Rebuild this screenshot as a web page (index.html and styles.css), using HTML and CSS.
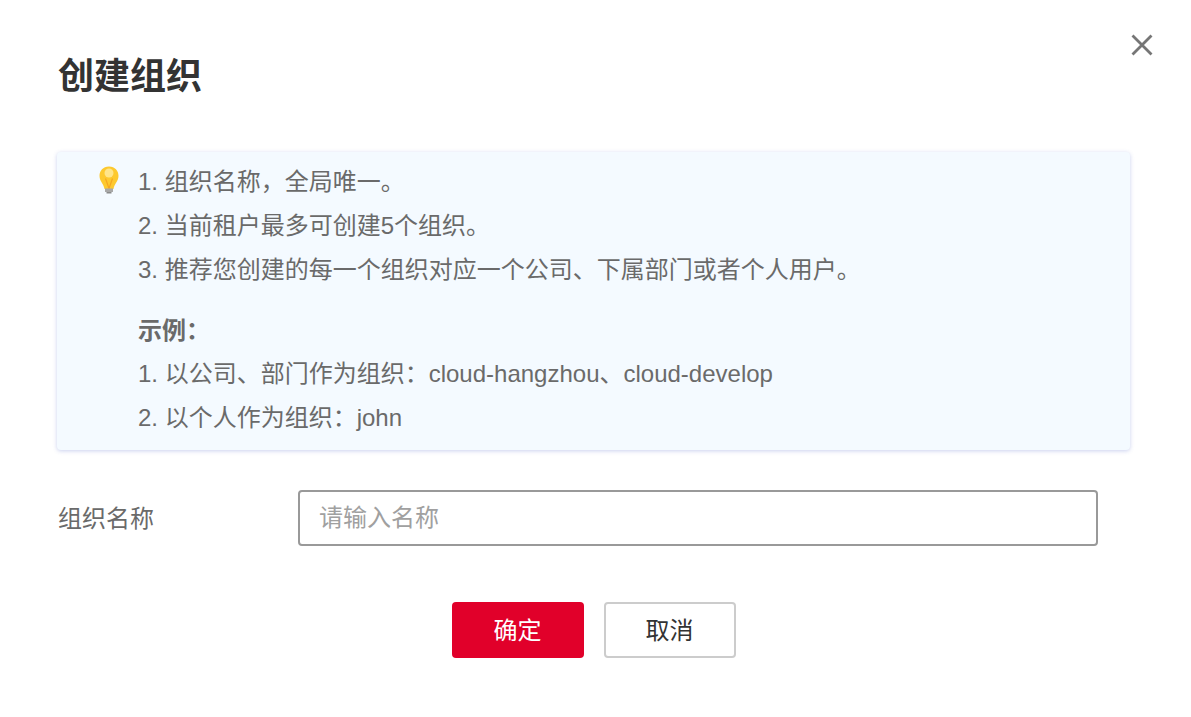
FILE: index.html
```html
<!DOCTYPE html>
<html lang="zh-CN">

<head>
    <meta charset="UTF-8">
    <meta name="viewport" content="width=device-width, initial-scale=1.0">
    <title>创建组织</title>
    <link rel="stylesheet" href="styles.css">
</head>

<body>
    <div class="dialog">
        <a href="#" class="close-btn">
            <svg width="22" height="22" viewBox="0 0 22 22">
                <path d="M1.5 1.5L20.5 20.5M20.5 1.5L1.5 20.5" stroke="#767676" stroke-width="2.8" fill="none" />
            </svg>
        </a>
        <h1 class="title">创建组织</h1>

        <div class="tips">
            <svg class="tips-icon" width="24" height="28" viewBox="0 0 24 28">
                <path d="M12 0.500C6 0.500 2.500 5 2.500 9.800c0 5.400 4.300 8.200 5 13.200h9c.7-5 5-7.800 5-13.200C21.500 5 18 0.500 12 0.500z" fill="#fdc92f" />
                <circle cx="12" cy="7" r="4.500" fill="#ffe58a" />
                <path d="M8.500 12.500l3.500 10 3.500-10" stroke="#f5a623" stroke-width="1.200" fill="none" />
                <rect x="8" y="22.500" width="8" height="3.500" fill="#a8a8a8" />
                <rect x="9.500" y="26" width="5" height="1.500" fill="#8a8a8a" />
            </svg>
            <ul class="tips-list">
                <li>1. 组织名称，全局唯一。</li>
                <li>2. 当前租户最多可创建5个组织。</li>
                <li>3. 推荐您创建的每一个组织对应一个公司、下属部门或者个人用户。</li>
            </ul>
            <ul class="tips-list example">
                <li class="example-title">示例：</li>
                <li>1. 以公司、部门作为组织：cloud-hangzhou、cloud-develop</li>
                <li>2. 以个人作为组织：john</li>
            </ul>
        </div>

        <form class="form">
            <div class="form-row">
                <label class="form-label">组织名称</label>
                <input class="form-input" type="text" placeholder="请输入名称" />
            </div>
            <div class="footer">
                <button type="button" class="btn btn-primary">确定</button>
                <button type="button" class="btn btn-cancel">取消</button>
            </div>
        </form>
    </div>
</body>

</html>
```
FILE: styles.css
```css
* {
    box-sizing: border-box;
}

body {
    margin: 0;
    background: #fff;
    font-family: "Liberation Sans", "Noto Sans CJK SC", sans-serif;
    color: #6a6a6a;
}

.dialog {
    position: relative;
    width: 1191px;
    height: 717px;
    padding: 52px 61px 0 57px;
}

.close-btn {
    position: absolute;
    top: 34px;
    right: 38px;
    display: block;
    width: 22px;
    height: 22px;
}

.title {
    margin: 0;
    padding-left: 1px;
    font-size: 36px;
    line-height: 50px;
    font-weight: 700;
    color: #333;
}

.tips {
    position: relative;
    height: 298px;
    margin-top: 50px;
    padding: 8px 0 0 81px;
    background: #f4faff;
    border-radius: 4px;
    box-shadow: 0 1px 4px rgba(80, 100, 200, 0.3);
}

.tips-icon {
    position: absolute;
    top: 14px;
    left: 40px;
}

.tips-list {
    margin: 0;
    padding: 0;
    list-style: none;
    font-size: 24px;
    line-height: 44px;
}

.example {
    margin-top: 17px;
}

.example-title {
    height: 43px;
    font-weight: 700;
}

.form-row {
    display: flex;
    align-items: center;
    margin-top: 40px;
}

.form-label {
    width: 241px;
    padding: 0 0 4px 1px;
    font-size: 24px;
}

.form-input {
    width: 800px;
    height: 56px;
    padding: 0 19px;
    border: 2px solid #999;
    border-radius: 4px;
    font-family: inherit;
    font-size: 24px;
    color: #333;
    outline: none;
}

.form-input::placeholder {
    color: #a0a0a0;
}

.footer {
    display: flex;
    justify-content: center;
    gap: 20px;
    margin-top: 56px;
}

.btn {
    width: 132px;
    height: 56px;
    padding: 0 0 4px;
    border-radius: 4px;
    font-family: inherit;
    font-size: 24px;
}

.btn-primary {
    border: 0;
    background: #e1002a;
    color: #fff;
}

.btn-cancel {
    border: 2px solid #ccc;
    background: #fff;
    color: #333;
}
```
